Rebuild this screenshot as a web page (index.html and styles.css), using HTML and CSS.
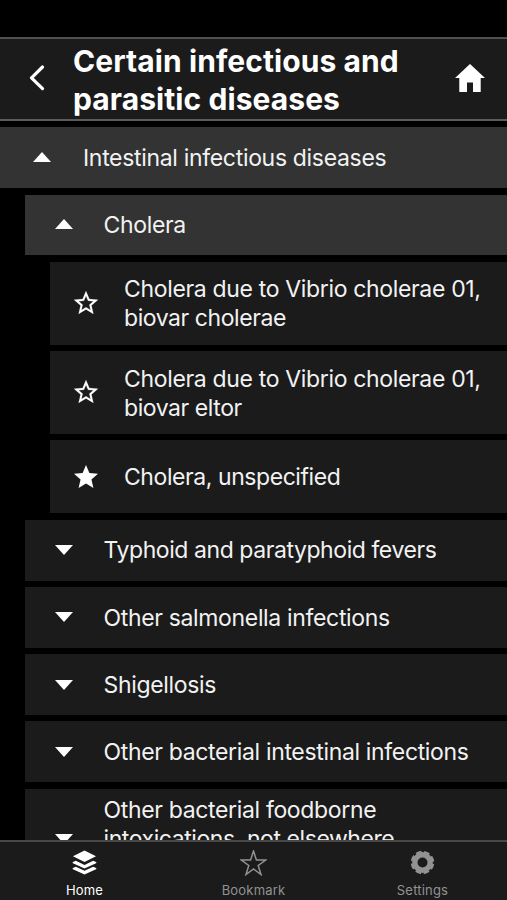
FILE: index.html
```html
<!DOCTYPE html>
<html lang="en">
<head>
<meta charset="utf-8">
<title>Certain infectious and parasitic diseases</title>
<link rel="stylesheet" href="styles.css">
</head>
<body>
<svg width="0" height="0" class="defs">
  <symbol id="up" viewBox="0 0 18 10"><path d="M0 10 9 0l9 10z"/></symbol>
  <symbol id="down" viewBox="0 0 18 10"><path d="M0 0h18L9 10z"/></symbol>
  <symbol id="star-line" viewBox="2 2 20 19"><path stroke="currentColor" stroke-width=".15" d="M22 9.240l-7.190-.62L12 2 9.190 8.630 2 9.240l5.460 4.730L5.820 21 12 17.270 18.180 21l-1.630-7.030zM12 15.400l-3.760 2.270 1-4.280-3.320-2.880 4.380-.38L12 6.100l1.710 4.040 4.380.38-3.320 2.880 1 4.280z"/></symbol>
  <symbol id="star" viewBox="2 2 20 19"><path d="M12 17.270 18.180 21l-1.640-7.030L22 9.240l-7.190-.61L12 2 9.190 8.630 2 9.240l5.460 4.730L5.820 21z"/></symbol>
</svg>
<div class="app">
  <header class="header">
    <svg class="back" viewBox="0 0 16 26"><path d="M13.500 2 2.500 12.800l11 10.800"/></svg>
    <h1>Certain infectious and<br>parasitic diseases</h1>
    <svg class="house" viewBox="0 0 30 28"><path d="M15 0 0 14h4.300v14h7.700v-9.500h6V28h7.700V14H30z"/></svg>
  </header>
  <main class="list">
    <div class="row open root"><svg class="arrow"><use href="#up"/></svg><p>Intestinal infectious diseases</p></div>
    <div class="row open level1"><svg class="arrow"><use href="#up"/></svg><p>Cholera</p></div>
    <div class="row level2 tall"><svg class="star"><use href="#star-line"/></svg><p>Cholera due to Vibrio cholerae 01,<br><span class="tight">biovar cholerae</span></p></div>
    <div class="row level2 tall"><svg class="star"><use href="#star-line"/></svg><p>Cholera due to Vibrio cholerae 01,<br><span class="tight">biovar eltor</span></p></div>
    <div class="row level2"><svg class="star"><use href="#star"/></svg><p class="tight">Cholera, unspecified</p></div>
    <div class="row level1 closed"><svg class="arrow"><use href="#down"/></svg><p class="tight">Typhoid and paratyphoid fevers</p></div>
    <div class="row level1 closed"><svg class="arrow"><use href="#down"/></svg><p>Other salmonella infections</p></div>
    <div class="row level1 closed"><svg class="arrow"><use href="#down"/></svg><p>Shigellosis</p></div>
    <div class="row level1 closed"><svg class="arrow"><use href="#down"/></svg><p>Other bacterial intestinal infections</p></div>
    <div class="row level1 closed long"><svg class="arrow"><use href="#down"/></svg><p>Other bacterial foodborne<br><span class="tight">intoxications, not elsewhere</span></p></div>
  </main>
  <nav class="tabs">
    <div class="tab active">
      <svg viewBox="0 0 26 26"><path d="M13 .5 25 6.500 13 12.500 1 6.500z"/><path d="M4 11.100 13 15.500l9-4.400 3 1.500c.5.300.5.900 0 1.200L13 19.200 1 13.800c-.5-.3-.5-.9 0-1.200zM4 17.300l9 4.400 9-4.400 3 1.500c.5.300.5.900 0 1.200l-12 5.400L1 20c-.5-.3-.5-.9 0-1.200z"/></svg>
      <span>Home</span>
    </div>
    <div class="tab">
      <svg class="line" viewBox="0 0 26 26"><path d="M13 1 15.900 9.900 25.200 10 17.700 15.500 20.500 24.500 13 19 5.500 24.500 8.300 15.500.8 10 10.100 9.900z"/></svg>
      <span>Bookmark</span>
    </div>
    <div class="tab">
      <svg class="gear" viewBox="0 0 26 26"><circle cx="13" cy="13" r="8" stroke-width="5.600"/><circle class="teeth" cx="13" cy="13" r="10.500" stroke-width="3.400"/></svg>
      <span>Settings</span>
    </div>
  </nav>
</div>
</body>
</html>
```
FILE: styles.css
```css
* { box-sizing: border-box; }
body { margin: 0; background: #000; color: #f2f2f2; font-family: Inter, "Liberation Sans", sans-serif; }
.defs { display: block; height: 0; }
.app { height: 900px; padding-top: 37px; display: flex; flex-direction: column; overflow: hidden; }
svg { display: block; flex: none; fill: currentColor; }
.header {
  flex: none; height: 84px; display: flex; align-items: center;
  padding: 0 22px 0 29px; color: #fff; background: #1b1b1b;
  border-top: 2px solid #505050; border-bottom: 2px solid #5c5c5c;
}
.back { width: 16px; height: 26px; margin-top: -2px; fill: none; stroke: currentColor; stroke-width: 3.200; stroke-linecap: round; stroke-linejoin: round; }
h1 { flex: 1; margin: 1px 0 0 28px; font-size: 30px; line-height: 38px; font-weight: 700; letter-spacing: 0.08px; white-space: nowrap; }
.house { width: 30px; height: 28px; margin-top: -2px; }
.list { flex: 1; min-height: 0; overflow: hidden; padding-top: 6.400px; display: flex; flex-direction: column; gap: 6.500px; }
.row { flex: none; height: 60.700px; display: flex; align-items: center; background: #1b1b1b; font-size: 23px; line-height: 29px; letter-spacing: -0.34px; white-space: nowrap; }
.row p { margin: 1.500px 0 0; }
.open { background: #333; }
.root { padding-left: 33px; }
.root p { margin-left: 32px; margin-top: 2.500px; letter-spacing: -0.32px; }
.level1 { margin-left: 25px; padding-left: 30px; }
.level1 p { margin-left: 30.500px; }
.level2 { margin-left: 50px; padding-left: 24px; height: 73px; }
.level2 p { margin-left: 26px; }
.level2.tall p { margin-top: 2.500px; }
.tall { height: 82.800px; }
.tight { letter-spacing: -0.43px; }
.long { height: 100px; align-items: flex-start; }
.long p { margin-top: 7px; }
.arrow { width: 18px; height: 10px; margin-top: -1px; color: #fff; }
.closed .arrow { margin-top: 0; }
.long .arrow { margin-top: 45px; }
.star { width: 24px; height: 23px; margin-top: -1px; color: #fff; }
.tabs { flex: none; height: 60px; display: flex; border-top: 2px solid #484848; background: #1b1b1b; color: #929292; }
.tab { flex: 1; display: flex; flex-direction: column; align-items: center; padding-top: 8px; font-size: 13px; line-height: 16px; letter-spacing: 0.2px; }
.tab svg { width: 25px; height: 25px; }
.tab .line { width: 27px; height: 26px; margin-bottom: -1px; }
.tab span { margin-top: 7px; }
.line { fill: none; stroke: currentColor; stroke-width: 1.500; }
.gear { fill: none; stroke: currentColor; }
.teeth { stroke-dasharray: 5.600 2.647; stroke-dashoffset: -1.320; }
.active { color: #fff; }
```
